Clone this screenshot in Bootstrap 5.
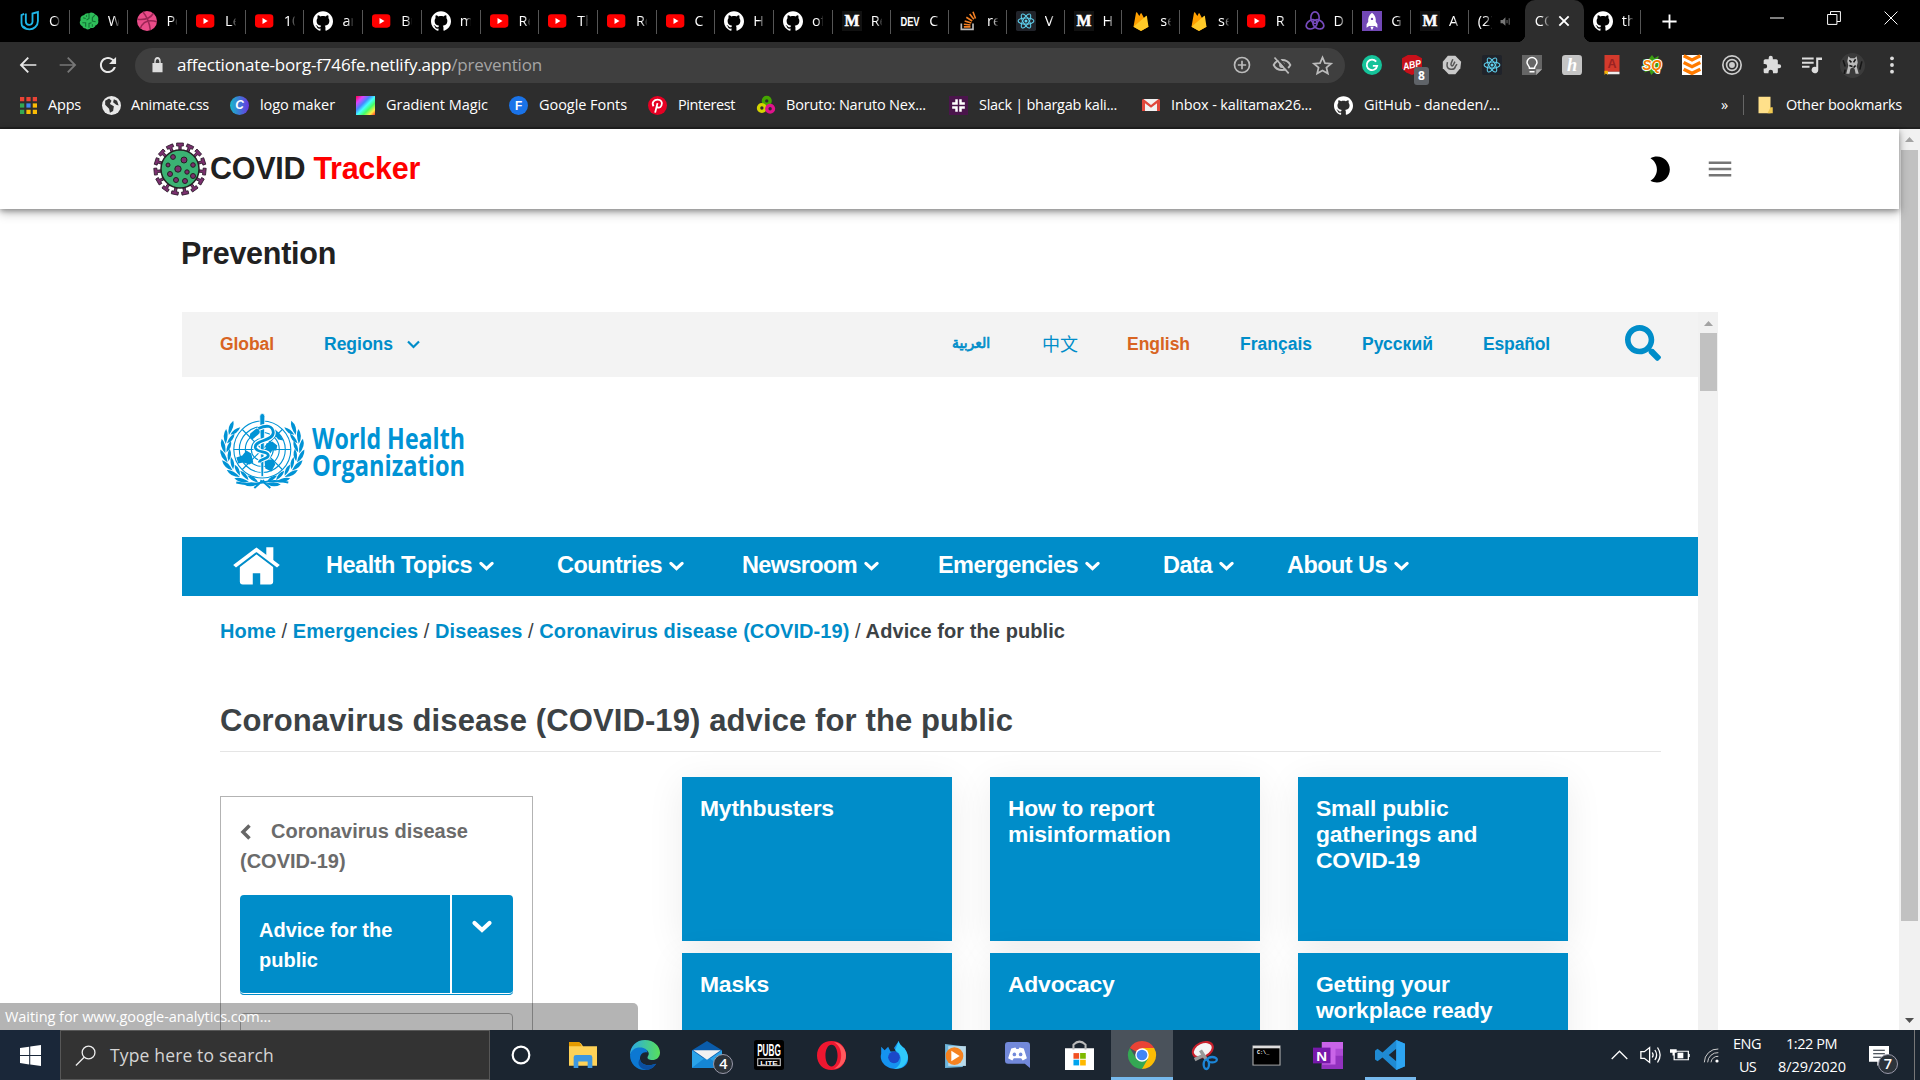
<!DOCTYPE html>
<html lang="en">
<head>
<meta charset="utf-8">
<title>COVID Tracker</title>
<link href="https://cdn.jsdelivr.net/npm/bootstrap@5.3.0/dist/css/bootstrap.min.css" rel="stylesheet">
<script src="https://cdn.jsdelivr.net/npm/bootstrap@5.3.0/dist/js/bootstrap.bundle.min.js"></script>
<style>
html,body{width:1920px;height:1080px;overflow:hidden}
body{font-family:"Liberation Sans",Arial,sans-serif;background:#fff;line-height:1.2}
svg{display:block;flex:none;overflow:visible}
.seg{font-family:"Open Sans","Noto Sans",sans-serif;font-size:14.5px;color:#fff}
.fit{white-space:nowrap;display:block;flex:none}
.strip{height:42px;background:#000;padding-left:11px}
.tabx{height:42px;flex:none;position:relative;padding-left:9px}
.tabx::after{content:"";position:absolute;right:0;top:10px;height:24px;width:1px;background:#555}
.tabx.noline::after{display:none}
.tabx .ttl{margin-left:9px;width:11px;overflow:hidden;white-space:nowrap;-webkit-mask-image:linear-gradient(90deg,#000 50%,rgba(0,0,0,.1));mask-image:linear-gradient(90deg,#000 50%,rgba(0,0,0,.1))}
.tabx.now{background:#2d2d2d;border-radius:10px 10px 0 0;padding-left:10px}
.tabx.now .ttl{margin:0;width:14px}
.tabx.now::before{content:"";position:absolute;left:-8px;right:-8px;bottom:0;height:8px;background:radial-gradient(circle at 0 0,transparent 8px,#2d2d2d 8.5px) left/8px 8px no-repeat,radial-gradient(circle at 100% 0,transparent 8px,#2d2d2d 8.5px) right/8px 8px no-repeat}
.winbtns{margin-left:auto;gap:43px;padding-right:22px;padding-bottom:6px}
.tools{height:46px;background:#2d2d2d;padding-left:18px}
.navbtns{gap:20px}
.omni{width:1210px;height:35px;border-radius:18px;background:#3f3f3f;margin-left:17px;padding:0 12px 0 17px}
.omni .url{font-size:17px;margin-left:14px}
.omni .url span{color:#a5a5a5}
.exts .cell{width:40px;position:relative}
.exts{margin-left:7px}
.mini{position:absolute;left:22px;top:12px;width:15px;height:18px;font-size:12px;line-height:18px;border-radius:3px;background:#5f6368;font-weight:700;text-align:center}
.marks{height:41px;background:#2d2d2d;border-bottom:2px solid #202020;padding-bottom:5px}
.pagearea{height:901px}
.main{width:1899px;position:relative}
.top{height:80px;padding:0 164px 0 153px;box-shadow:0 2px 5px rgba(0,0,0,.3),0 4px 10px rgba(0,0,0,.25);color:#212121}
.brandtxt{font-size:30.5px;font-weight:700;margin-left:3px;margin-top:-2px}
.red{color:#f00}
.htitle{font-size:30.5px;font-weight:700;color:#212121;line-height:36px;margin:26px 0 0 181px}
.frame{width:1536px;height:718px;margin:41px 0 0 182px;overflow:hidden}
.doc{width:1516px;overflow:hidden;color:#3c4245;font-weight:700}
.langs{height:65px;background:#f3f3f3;font-size:17.5px;color:#008dc9}
.orange{color:#d86422}
.logorow{height:160px;padding:37px 0 0 38px}
.mainnav{height:59px;background:#008dc9;color:#fff;font-size:23.5px}
.crumbs{font-size:20px;line-height:24px;margin:23px 0 0 38px;color:#3c4245}
.crumbs a{color:#008dc9;text-decoration:none}
.crumbs i{font-style:normal;font-weight:400}
.h1x{font-size:31px;line-height:36px;font-weight:700;width:1441px;margin:60px 0 0 38px;padding-bottom:11px;border-bottom:1px solid #e5e5e5;height:49px}
.cols{margin:25px 0 0 38px}
.side{width:313px;height:400px;border:1px solid #b3b3b3;margin-top:19px;padding:19px;font-size:20px;line-height:30px;color:#6b6b6b}
.side .back{height:79px}
.side .pick{width:273px;height:100px;background:#008dc9;border-radius:4px;color:#fff;border-bottom:1px solid #008dc9;box-shadow:inset 0 -1px #fff;margin-bottom:18px;padding-left:19px}
.side .pick .arrow{width:63px;border-left:2px solid #fff;padding:25px 0 0 20px}
.side .next{width:273px;height:100px;border:1px solid #b3b3b3;border-radius:4px}
.tiles{display:grid;grid-template-columns:270px 270px 270px;grid-template-rows:164px 164px;gap:12px 38px;margin-left:149px}
.tile{background:#008dc9;color:#fff;font-size:22.9px;letter-spacing:-.2px;line-height:26px;padding:18px;box-shadow:0 6px 35px rgba(0,0,0,.075)}
.sb{background:#f1f1f1;flex:none}
.sb .thumb{background:#c1c1c1;width:17px;margin-left:2px}
.bubble{position:absolute;left:0;top:1003px;width:638px;height:27px;background:rgba(0,0,0,.295);border-radius:0 5px 0 0;padding:4px 5px;line-height:20px}
.tbar{height:50px;background:#1b2530}
.start{width:60px;height:50px;background:#1a2739}
.find{width:430px;height:50px;background:#333;border:1px solid #575757;padding-left:14px;color:#d5d5d5;font-size:17.5px}
.find .fit{margin-left:14px}
.task{width:62.1px;height:50px;flex:none;position:relative}
.task.on{background:#4a525b;border-bottom:3px solid #76b9ed;padding-top:3px}
.task.run::after{content:"";position:absolute;left:6px;right:5px;bottom:0;height:3px;background:#76b9ed}
.count{position:absolute;width:20px;height:20px;border-radius:50%;border:1px solid #99a;background:#2c333a;line-height:18px;text-align:center;font-weight:600;left:37px;top:24px}
.lang2{line-height:23px}
.in6{margin-left:6px}
</style>
</head>
<body class="d-flex flex-column">
<div class="strip d-flex seg" id="strip"></div>
<div class="tools d-flex align-items-center seg">
  <div class="navbtns d-flex" id="navb"></div>
  <div class="omni d-flex align-items-center">
    <span data-i="lock" data-s="11,16"></span>
    <div class="url fit" data-fit="365">affectionate-borg-f746fe.netlify.app<span>/prevention</span></div>
    <div class="d-flex ms-auto" style="gap:20px"><span data-i="zoomin" data-s="20"></span><span data-i="eye" data-s="20"></span><span data-i="star" data-s="21"></span></div>
  </div>
  <div class="exts d-flex align-items-center" id="exts"></div>
</div>
<div class="marks d-flex align-items-center seg" id="marks"></div>
<div class="pagearea d-flex">
  <div class="main">
    <div class="top d-flex align-items-center">
      <svg id="virus" width="54" height="54" viewBox="-27 -27 54 54"></svg>
      <div class="brandtxt fit" data-fit="210">COVID <span class="red">Tracker</span></div>
      <div class="d-flex ms-auto" style="gap:30px"><span data-i="moon" data-s="31"></span><span data-i="menu" data-s="30"></span></div>
    </div>
    <div class="htitle"><span class="fit" data-fit="155">Prevention</span></div>
    <div class="frame d-flex">
      <div class="doc">
        <div class="langs d-flex align-items-center" id="langs"></div>
        <div class="logorow">
          <svg id="who" width="246" height="76" viewBox="0 0 246 76"></svg>
        </div>
        <div class="mainnav d-flex align-items-center" id="mainnav"></div>
        <div class="crumbs"><span class="fit" data-fit="845"><a href="#">Home</a> <i>/</i> <a href="#">Emergencies</a> <i>/</i> <a href="#">Diseases</a> <i>/</i> <a href="#">Coronavirus disease (COVID-19)</a> <i>/</i> Advice for the public</span></div>
        <h1 class="h1x"><span class="fit" data-fit="793">Coronavirus disease (COVID-19) advice for the public</span></h1>
        <div class="cols d-flex align-items-start">
          <div class="side">
            <div class="back"><span class="d-flex align-items-center"><span data-i="chevl" data-s="12,16"></span><span class="fit ms-3" style="padding-left:3px" data-fit="200">Coronavirus disease</span></span>(COVID-19)</div>
            <div class="pick d-flex justify-content-between"><div class="pt-3 mt-1">Advice for the<br>public</div><div class="arrow"><span data-i="chev" data-s="20,13"></span></div></div>
            <div class="next"></div>
          </div>
          <div class="tiles">
            <div class="tile">Mythbusters</div><div class="tile">How to report misinformation</div><div class="tile">Small public gatherings and COVID-19</div>
            <div class="tile">Masks</div><div class="tile">Advocacy</div><div class="tile">Getting your workplace ready</div>
          </div>
        </div>
      </div>
      <div class="sb" style="width:20px"><svg width="20" height="21"><path d="M6 14l4.500-5 4.500 5z" fill="#a3a3a3"/></svg><div class="thumb" style="height:58px"></div></div>
    </div>
  </div>
  <div class="sb d-flex flex-column" style="width:21px"><svg width="20" height="21"><path d="M6 13l4.500-5 4.500 5z" fill="#a3a3a3"/></svg><div class="thumb" style="height:771px"></div><svg class="mt-auto" width="20" height="21"><path d="M6 9l4.500 5 4.500-5z" fill="#505050"/></svg></div>
</div>
<div class="tbar d-flex seg">
  <div class="start d-flex align-items-center justify-content-center"><span data-i="win" data-s="21"></span></div>
  <div class="find d-flex align-items-center"><span data-i="glass" data-s="21"></span><span class="fit" data-fit="164">Type here to search</span></div>
  <div class="d-flex" id="tasks"></div>
  <div class="d-flex ms-auto align-items-center" id="tray"></div>
</div>
<div class="bubble seg"><span class="fit" data-fit="266">Waiting for www.google-analytics.com...</span></div>

<script>
const react='<g fill="none" stroke="#5fd0ee" stroke-width="1.300"><ellipse cx="12" cy="12" rx="9.500" ry="3.700"/><ellipse cx="12" cy="12" rx="9.500" ry="3.700" transform="rotate(60 12 12)"/><ellipse cx="12" cy="12" rx="9.500" ry="3.700" transform="rotate(120 12 12)"/></g><circle cx="12" cy="12" r="1.800" fill="#5fd0ee"/>';
const gh='M12 .297c-6.63 0-12 5.373-12 12 0 5.303 3.438 9.8 8.205 11.385.6.113.82-.258.82-.577 0-.285-.01-1.04-.015-2.04-3.338.724-4.042-1.61-4.042-1.61C4.422 18.07 3.633 17.7 3.633 17.7c-1.087-.744.084-.729.084-.729 1.205.084 1.838 1.236 1.838 1.236 1.07 1.835 2.809 1.305 3.495.998.108-.776.417-1.305.76-1.605-2.665-.3-5.466-1.332-5.466-5.93 0-1.31.465-2.38 1.235-3.22-.135-.303-.54-1.523.105-3.176 0 0 1.005-.322 3.3 1.23.96-.267 1.98-.399 3-.405 1.02.006 2.04.138 3 .405 2.28-1.552 3.285-1.23 3.285-1.23.645 1.653.24 2.873.12 3.176.765.84 1.23 1.91 1.23 3.22 0 4.61-2.805 5.625-5.475 5.92.42.36.81 1.096.81 2.22 0 1.606-.015 2.896-.015 3.286 0 .315.21.69.825.57C20.565 22.092 24 17.592 24 12.297c0-6.627-5.373-12-12-12';
const letter=(t,o={})=>`<text x="12" y="${o.y||18}" text-anchor="middle" font-family="${o.f||'Liberation Sans'}" font-weight="${o.w||700}" font-size="${o.s||16}" fill="${o.c||'#fff'}" ${o.l?`textLength="${o.l}" lengthAdjust="spacingAndGlyphs"`:''} ${o.x||''}>${t}</text>`;
const box=(c,r=0)=>`<rect width="24" height="24" rx="${r}" fill="${c}"/>`;
const P=(d,f='#fff')=>`<path d="${d}" fill="${f}"/>`;
const S=(d,c='#fff',w=2)=>`<path d="${d}" fill="none" stroke="${c}" stroke-width="${w}"/>`;
const I={
 uda:S('M5 3.500L1.800 5v9.500c0 4.500 3 7 6.500 7','#1fb6e8',2.200)+S('M7 3v9.500c0 5 7.500 6 8 .500V3l6.500-1.800V12c0 6-5 10-10 10-3.500 0-6-1.500-8-4','#1fb6e8',2.200),
 brain:'<path d="M12 3c2-2 6-1 7 1 3 1 5 4 4 7 1 3-1 6-3 6-1 3-4 4-6 3-1 2-4 3-6 1-2 0-4-1-4-3-3-1-4-5-2-7-1-3 1-6 4-6 1-2 4-3 6-2z" fill="#2ebd59"/>'+S('M12 3v6l-3 2M5 8l3 1M4 14h4v5M19 5l-3 3v4l4 1M12 20v-5l3-1M9 5v2M16 19v-3','#127434',1.300),
 drib:'<circle cx="12" cy="12" r="12" fill="#ea4c89"/>'+S('M7 1c5 6 8 13 9 22M.500 10c9 1 16-2 19-7M4 21c3-8 10-11 20-8','#9b2554',1.800),
 yt:'<rect x="0" y="4" width="22" height="16" rx="4" fill="#f00"/>'+P('M9 8.500l6 3.500-6 3.500z'),
 gh:P(gh),
 med:box('#111')+letter('M',{f:'Liberation Serif',s:19,y:18,x:'stroke="#fff" stroke-width=".6"'}),
 dev:box('#0a0a0a')+letter('DEV',{s:16,l:23}),
 so:S('M4 15v7h14v-7','#bcbbbb',2)+S('M7 19h8M7 16l8 .800M8 12l8 2.500M10 7.500l7 4.500M14 3.500l5 6.500M18 1l3 8','#f48024',1.900),
 react:box('#20232a',2)+react,
 fire:P('M3 19L6 2c.2-.8 1-.8 1.300-.2L10 6l1.500-3c.3-.5 1-.5 1.300 0L21 19l-8 4.500c-.6.300-1.300.300-2 0z','#ffa000')+P('M3 19L18 6c.4-.4 1-.2 1.100.4L21 19l-8 4.500c-.6.300-1.300.300-2 0z','#ffca28'),
 redux:'<g fill="none" stroke="#764abc" stroke-width="2"><ellipse cx="12" cy="8" rx="5" ry="7"/><ellipse cx="8" cy="16" rx="5" ry="7" transform="rotate(60 8 16)"/><ellipse cx="16" cy="16" rx="5" ry="7" transform="rotate(-60 16 16)"/></g>',
 rocket:box('#7248b6')+P('M12 2c4 3 5 7 4.500 11l2 3v4l-3-2h-7l-3 2v-4l2-3C7 9 8 5 12 2zM10 19h4l-2 4z')+'<circle cx="12" cy="9.500" r="1.400" fill="#7248b6"/>',
 spk:P('M1 9h4l5-5v16l-5-5H1z','#777')+S('M13 9v6M17 6v12','#666',2),
 x:S('M4 4l16 16M20 4L4 20','#fff',3.200), plus:S('M12 2v20M2 12h20','#fff',2.600),
 min:S('M0 12h24','#fff',1.700), max:S('M1 6h16v17H1zM6 6V1h17v17h-6','#fff',1.700), close:S('M1 1l22 22M23 1L1 23','#fff',1.700),
 back:P('M22 11H6.100l7-7L11.500 2.500 2 12l9.500 9.500 1.600-1.500-7-7H22z','#e8e8e8'), fwd:P('M2 11h15.900l-7-7 1.600-1.500L22 12l-9.500 9.500-1.600-1.500 7-7H2z','#777'),
 rel:P('M18.800 5.200C17 3.400 14.700 2.300 12 2.300 6.600 2.300 2.300 6.600 2.300 12S6.600 21.700 12 21.700c4.500 0 8.300-3.100 9.400-7.300h-2.600c-1 2.800-3.700 4.900-6.800 4.900-4 0-7.300-3.300-7.300-7.300S8 4.700 12 4.700c2 0 3.800.8 5.100 2.100L13.200 10.700h8.500V2.300z','#e8e8e8'),
 zoomin:'<circle cx="12" cy="12" r="9" fill="none" stroke="#bbb" stroke-width="2"/>'+S('M12 7v10M7 12h10','#bbb',2),
 eye:S('M2 12c4-8 16-8 20 0-4 8-16 8-20 0z','#bbb',2.200)+'<circle cx="12" cy="12" r="3.500" fill="#bbb"/>'+S('M5 1l17 20','#3f3f3f',3)+S('M3 3l17 19','#bbb',2),
 star:S('M12 2.800l2.800 6.400 7 .6-5.300 4.600 1.600 6.800-6.100-3.600-6.100 3.600 1.600-6.800L2.200 9.800l7-.6z','#bbb',2),
 gram:'<circle cx="12" cy="12" r="12" fill="#15c39a"/>'+S('M17 8a6.300 6.300 0 1 0 1.200 5H13','#fff',2.200),
 abp:P('M7 0h10l7 4v12l-5 5-7 3-7-3-5-5V4z','#c8101a')+letter('ABP',{s:12,y:16,l:22,x:'transform="rotate(-12 12 12)" font-style="italic"'}),
 mag:P('M7 1h9l7 7-1 8-6 7H8l-7-7V8z','#c9c9c9')+S('M6.500 8.500L6 12c0 6 8.500 7 10 2l2-3M13 5l-2 5c-1 3 1.500 4 2.500 2l2-4','#555',1.800),
 bulb:P('M0 0h24v17l-7 7H0z','#666')+P('M17 24v-7h7z','#aaa')+S('M9 16c0-3-3-4-3-7a6 6 0 0 1 12 0c0 3-3 4-3 7zM9 20h6','#fff',1.800),
 honey:box('#c4c4c4',4)+letter('h',{f:'Liberation Serif',s:22,y:19,x:'font-style="italic"'}),
 book:P('M3 0h18v20H6l-3 2z','#d33a2c')+P('M3 20h18v3H6z','#eee')+P('M3 19h4v5l-2-2-2 2z','#f5b400')+letter('A',{c:'#922',s:15,y:16}),
 sq:P('M12 0l3 4 5-3-1 6 5 1-3 5 3 4-6 1 1 5-5-2-3 3-2-5-6 2 1-5-4-3 4-3-3-5 6 1z','#3c9e14')+letter('SQ',{c:'#f47a00',s:18,y:18.5,l:23,x:'stroke="#fff" stroke-width="2.5" paint-order="stroke" font-style="italic"'}),
 daily:box('#fff')+S('M2 1l10 5 10-5M2 9l10 5 10-5M2 17l10 5 10-5','#ff7b00',4),
 target:'<g fill="none" stroke="#ccc" stroke-width="2"><circle cx="12" cy="12" r="11"/><circle cx="12" cy="12" r="6.500"/></g><circle cx="12" cy="12" r="3.500" fill="#ccc"/>',
 puz:P('M20.500 11H19V7c0-1.100-.9-2-2-2h-4V3.500a2.500 2.500 0 0 0-5 0V5H4c-1.100 0-2 .9-2 2v3.800h1.500a2.700 2.700 0 0 1 0 5.400H2V20c0 1.100.9 2 2 2h3.800v-1.500a2.700 2.700 0 0 1 5.400 0V22H17c1.100 0 2-.9 2-2v-4h1.500a2.500 2.500 0 0 0 0-5z','#ddd'),
 queue:P('M0 3h14v2.400H0zM0 8h14v2.400H0zM0 13h9v2.400H0zM17 3h7v3h-4.500v12a4 4 0 1 1-2.500-3.700z','#ddd'),
 ava:'<circle cx="12" cy="12" r="12" fill="#3b3b3b"/><path d="M8 3l2 2h4l2-2 1 6-1 4 2 7h-3l-1-5-2-1-2 1-1 5H6l2-8-1-4z" fill="#bbb"/><path d="M9 7l2 2M15 6l-2 3M9 12l3 1M15 12l-2 2M3 7l2 6M21 8l-2 8M5 16l-1 4" stroke="#161616" stroke-width="1.500"/>',
 dots:'<g fill="#ddd"><circle cx="12" cy="4" r="2.300"/><circle cx="12" cy="12" r="2.300"/><circle cx="12" cy="20" r="2.300"/></g>',
 apps:['#ea4335','#ea4335','#ea4335','#34a853','#4285f4','#fbbc05','#34a853','#fbbc05','#fbbc05'].map((c,i)=>`<rect x="${i%3*9}" y="${(i/3|0)*9}" width="6" height="6" fill="${c}"/>`).join(''),
 globe:'<circle cx="12" cy="12" r="12" fill="#e8e8e8"/>'+P('M4 6l5-3 3 3-2 4 5 3-1 6-4 2-1-5-5-5zM15 4l4 2 2 6-3-1-4-3z','#333'),
 canva:'<defs><linearGradient id="cg" x1="0" x2="1"><stop stop-color="#16b8cb"/><stop offset="1" stop-color="#6a35e0"/></linearGradient></defs><circle cx="12" cy="12" r="12" fill="url(#cg)"/>'+letter('C',{s:15,y:17,x:'font-style="italic"'}),
 grad:'<defs><linearGradient id="gg" x2="1" y2="1"><stop stop-color="#f04"/><stop offset=".2" stop-color="#d4f"/><stop offset=".38" stop-color="#48f"/><stop offset=".52" stop-color="#4ff"/><stop offset=".68" stop-color="#4f6"/><stop offset=".85" stop-color="#fe4"/><stop offset="1" stop-color="#f32"/></linearGradient></defs>'+box('url(#gg)'),
 gf:'<circle cx="12" cy="12" r="12" fill="#1a73e8"/>'+letter('F',{s:15,y:17.500}),
 pin:'<circle cx="12" cy="12" r="12" fill="#e60023"/>'+S('M9 21l3-12M7 13c-3-5 1-8.500 5-8.500s7 3 5 7.500c-1.500 3.500-5 3.500-6 1','#fff',2.300),
 trip:'<g fill="none" stroke-width="4.500"><circle cx="13" cy="6.500" r="4.500" stroke="#44a500"/><circle cx="6.500" cy="16" r="4.500" stroke="#d4d400"/><circle cx="17.500" cy="17" r="4.500" stroke="#e0128c"/></g>',
 slack:box('#4a154b')+S('M9.500 4v7M14.500 13v7M4 14.500h7M13 9.500h7M4 9.500h4M16 14.500h4M14.500 4v4M9.500 16v4','#fff',3.200),
 gmail:P('M2 4h20v16H2z','#f1f1f1')+P('M0 5l2-1 10 8 10-8 2 1v15h-4V9.500l-8 6-8-6V20H0z','#e0473b'),
 fold:P('M2 1h16v22H2z','#ffe08a')+P('M18 15h3v8h-7z','#f0c850'),
 lock:P('M5 9V7a7 7 0 0 1 14 0v2h4v14H1V9zm3 0h8V7a4 4 0 0 0-8 0z','#ddd'),
 moon:P('M10 2c-1.820 0-3.530.5-5 1.350C7.990 5.080 10 8.300 10 12s-2.010 6.920-5 8.650C6.470 21.500 8.180 22 10 22c5.520 0 10-4.480 10-10S15.520 2 10 2z','#000'),
 menu:P('M3 18h18v-2H3v2zm0-5h18v-2H3v2zm0-7v2h18V6H3z','#757575'),
 search:'<g transform="scale(.046875)">'+P('M505 442.7L405.3 343c-4.500-4.500-10.600-7-17-7H372c27.600-35.300 44-79.700 44-128C416 93.100 322.900 0 208 0S0 93.100 0 208s93.100 208 208 208c48.300 0 92.700-16.400 128-44v16.300c0 6.400 2.500 12.500 7 17l99.700 99.700c9.400 9.400 24.600 9.400 33.900 0l28.300-28.300c9.400-9.400 9.400-24.600.1-34zM208 336c-70.700 0-128-57.200-128-128 0-70.700 57.200-128 128-128 70.700 0 128 57.200 128 128 0 70.700-57.200 128-128 128z','#008dc9')+'</g>',
 home:P('M12 4.300l8.500 7.800V22c0 1-.5 1.700-1.500 1.700h-5.100v-7.200h-3.800v7.200H5c-1 0-1.500-.7-1.500-1.700v-9.900z')+S('M.8 12.700L12 2.200l11.200 10.500','#008dc9',3.600)+S('M.8 12.200L12 1.700l11.200 10.500','#fff',2.100)+P('M17 .200h3.600v9L17 6z'),
 win:P('M0 3.300l10.500-1.400v9.600H0zM11.700 1.700L24 0v11.500H11.700zM0 12.600h10.500v9.600L0 20.700zM11.700 12.600H24V24l-12.300-1.700z'),
 glass:'<circle cx="15.500" cy="8.500" r="7.300" fill="none" stroke="#eee" stroke-width="1.500"/>'+S('M10.500 14L1 23.500','#eee',1.500),
 cort:'<circle cx="12" cy="12" r="10" fill="none" stroke="#fff" stroke-width="2.600"/>',
 folder:P('M0 1h10l2 3h12v18H0z','#ffd257')+P('M0 0h9l2 4H0z','#e59b00')+P('M4 24V14q0-2 2-2h12q2 0 2 2v10h-4v-6H8v6z','#3d97e0'),
 edge:'<defs><linearGradient id="eg" x1="0" x2="1"><stop stop-color="#2aa8e8"/><stop offset="1" stop-color="#58e05a"/></linearGradient></defs>'+P('M0 12C0 5 5 0 12 0c7 0 12 5 12 10 0 4-3 6-6 6s-4-1-4-2 1-1.500 1-3c0-2-2-4-6-4-5 0-8 3-9 5z','url(#eg)')+P('M0 12c1-4 4-6 8-6 4 0 6 2 6 4-4-1-6 2-6 5 0 4 5 6 9 5l4-1c-2 3-5 5-9 5C5 24 0 19 0 12z','#0c78d2')+P('M8 15c0 4 5 6 9 5l4-1c-2 3-5 5-8 5-5-1-8-5-5-9z','#0b4fa0'),
 mail:P('M0 8l12-8 12 8v15H0z','#0a5cab')+P('M0 8l12 9L24 8v15H0z','#2aa3e8')+P('M0 23L12 13l12 10z','#1586d4')+P('M1 8h22L12 16z','#f1f1f1'),
 pubg:box('#000',2)+letter('PUBG',{s:12.500,y:13,l:19})+'<rect x="3" y="15" width="18" height="5.500" fill="none" stroke="#ddd" stroke-width=".8"/>'+letter('LITE',{s:5,y:19.800,l:14}),
 opera:'<path fill-rule="evenodd" fill="#ee1730" d="M12 0C5 0 0 5 0 12s5 12 12 12 12-5 12-12S19 0 12 0zm0 3c3 0 5 4 5 9s-2 9-5 9-5-4-5-9 2-9 5-9z"/><path d="M14 1c5 0 10 5 10 11s-5 11-10 11c4-2 6-6 6-11s-2-9-6-11z" fill="#ff5a5e"/>',
 fox:P('M1 5l3 3 3-3 2 4h5l-2-3 4-6 2 5 3 1 3 7c1 7-4 11-11 11S-1 18 1 11z','#1593f0')+P('M13 8l3-8c0 4 8 6 8 14-1 7-6 10-12 10 6-2 9-11 1-16z','#30c8fa')+'<circle cx="12" cy="14" r="5" fill="#1b48c8"/>',
 wmp:P('M2 1l17 2v20L2 24z','#6fb7dd')+P('M5 3h17v19H5z','#b9daea')+'<circle cx="11" cy="12.500" r="8.500" fill="#f58220"/>'+P('M8 7.500l8 5-8 5z'),
 disc:P('M3 0h18q3 0 3 3v21l-5-4H3q-3 0-3-3V3q0-3 3-3z','#7289da')+P('M6 6l4-1 1 1.500h2L14 5l4 1 3 9-4 2-1.500-2h-7L7 17l-4-2z')+'<circle cx="9" cy="11.500" r="1.700" fill="#7289da"/><circle cx="15" cy="11.500" r="1.700" fill="#7289da"/>',
 store:P('M0 6h24v18H0z')+S('M7 7V3q5-5 10 0v4','#bbb',1.700)+P('M7 10h4.700v4.700H7z','#f25022')+P('M12.500 10h4.700v4.700h-4.700z','#7fba00')+P('M7 15.500h4.700v4.700H7z','#00a4ef')+P('M12.500 15.500h4.700v4.700h-4.700z','#ffb900'),
 chrome:P('M12 12V6h10.400A12 12 0 0 1 12 24z','#fbbc05')+P('M12 12l5.200 3L12 24A12 12 0 0 1 1.600 6L7 15z','#34a853')+P('M12 12L1.600 6A12 12 0 0 1 22.400 6H12z','#ea4335')+'<circle cx="12" cy="12" r="5.800" fill="#fff"/><circle cx="12" cy="12" r="4.600" fill="#4285f4"/>',
 snip:'<ellipse cx="11" cy="7.500" rx="9" ry="6" fill="#f4f4f4" stroke="#c8202c" stroke-width="1.800" transform="rotate(-25 11 7.500)"/>'+S('M4 16l8-4M9 8l5 8','#999',3)+'<g fill="none" stroke="#1c86d8" stroke-width="2"><ellipse cx="19" cy="16" rx="4" ry="2.300"/><ellipse cx="14" cy="20" rx="2.300" ry="4"/></g>',
 cmd:'<rect y="2" width="24" height="20" fill="#000" stroke="#aaa" stroke-width="1"/><rect y="2" width="24" height="2.500" fill="#ddd"/>'+letter('C:\\_',{s:6,y:10,l:11,f:'Liberation Mono',x:'dx="-3"'}),
 one:P('M7 0h17v24H7z','#c964e8')+P('M18 6h6v6h-6z','#ae4bd5')+P('M18 12h6v12H7v-4h11z','#9332bf')+P('M0 5h14v14H0z','#7719aa')+letter('N',{s:12,y:16.500,x:'dx="-5"'}),
 code:P('M17 0l7 3v18l-7 3L6 14 2 17l-2-1.500v-7L2 7l4 3zM17 7l-6 5 6 5z','#1f8ad2')+P('M17 0l7 3v18l-7 3z','#2da5f2'),
 up:S('M1 17L12 6l11 11','#fff',1.800),
 vol:S('M1 8h4l6-5v18l-6-5H1z','#fff',1.500)+S('M14 9q2 3 0 6M17 6q4 6 0 12M20 3q6 9 0 18','#fff',1.500),
 batt:S('M5 6h17v12H5V6M23 10v4','#fff',1.500)+P('M9 8h7v8H9z')+P('M0 3h8v5H5v4H3V8H0z'),
 wifi:S('M2 23A20 20 0 0 1 23 3M7 23A15 15 0 0 1 23 8.500M12 23A10 10 0 0 1 23 14','#ccc',1.500)+'<circle cx="21" cy="21" r="2.400" fill="#fff"/>',
 note:P('M0 1h24v18h-9l-5 5v-5H0z')+S('M5 6h14M5 10h14M5 14h10','#1b2530',1.300)
};
const ic=(n,w=20,h=w,extra='')=>{
  if(n==='chev')return `<svg width="${w}" height="${h}" viewBox="0 0 20 13"><path d="M2.500 3L10 10 17.500 3" fill="none" stroke="#fff" stroke-width="4.200" stroke-linecap="round"/></svg>`;
  if(n==='chevb')return `<svg width="${w}" height="${h}" viewBox="0 0 13 9"><path d="M1 1.500l5.500 5.500L12 1.500" fill="none" stroke="#008dc9" stroke-width="2.200"/></svg>`;
  if(n==='chevl')return `<svg width="${w}" height="${h}" viewBox="0 0 12 16"><path d="M9.500 2.500L3 9 9.500 15.500" fill="none" stroke="#666" stroke-width="3.500"/></svg>`;
  return `<svg width="${w}" height="${h}" viewBox="0 0 24 24" preserveAspectRatio="none" ${extra}>${I[n]}</svg>`;
};
const $=id=>document.getElementById(id);
const fit=(t,w,c='')=>`<span class="fit ${c}" data-fit="${w}">${t}</span>`;
// Fills a flex row; each item is [start, end, markup] and the free space before it becomes its margin.
const row=(el,items,from=0)=>{let p=from;el.innerHTML=items.map(([a,b,h])=>{const s=`<div class="d-flex align-items-center flex-shrink-0" style="margin-left:${a-p}px;width:${b-a}px">${h}</div>`;p=b;return s}).join('')};

document.querySelectorAll('[data-i]').forEach(e=>{const [w,h]=e.dataset.s.split(',').map(Number);e.innerHTML=ic(e.dataset.i,w,h||w)});

const tabs=[['uda','On'],['brain','We'],['drib','Po'],['yt','Le'],['yt','10'],['gh','an'],['yt','Bu'],['gh','m'],['yt','Re'],['yt','Th'],['yt','Re'],['yt','C'],['gh','H'],['gh','of'],['med','Re'],['dev','C'],['so','re'],['react','V'],['med','H'],['fire','se'],['fire','se'],['yt','R'],['redux','D'],['rocket','G'],['med','A']];
$('strip').innerHTML=tabs.map(([i,t],k)=>`<div class="tabx d-flex align-items-center" style="width:${k<15?58.7:57.75}px">${ic(i,20,20)}<span class="ttl">${t}</span></div>`).join('')
 +`<div class="tabx noline d-flex align-items-center" style="width:56px"><span class="ttl m-0" style="width:14px">(2)</span><span class="ms-2">${ic('spk',13)}</span></div>`
 +`<div class="tabx noline now d-flex align-items-center" style="width:59px"><span class="ttl">CO</span><span class="ms-2">${ic('x',14)}</span></div>`
 +`<div class="tabx d-flex align-items-center" style="width:57px">${ic('gh',20)}<span class="ttl">th</span></div><div class="d-flex align-items-center ms-3 ps-1">${ic('plus',17)}</div><div class="winbtns d-flex align-items-center">${ic('min',14)}${ic('max',14)}${ic('close',14)}</div>`;
$('navb').innerHTML=ic('back',20)+ic('fwd',20)+ic('rel',20);
$('exts').innerHTML=['gram','abp','mag','react','bulb','honey','book','sq','daily','target','puz','queue','ava','dots'].map((n,k)=>`<div class="cell d-flex justify-content-center">${ic(n,n=='ava'?25:20)}${k==1?'<span class="mini">8</span>':''}</div>`).join('');

const bm=[['apps',20,'Apps',48,81,17],['globe',102,'Animate.css',131,209],['canva',230,'logo maker',260,335],['grad',356,'Gradient Magic',386,488],['gf',509,'Google Fonts',539,627],['pin',648,'Pinterest',678,735],['trip',757,'Boruto: Naruto Nex...',786,926,18],['slack',949,'Slack | bhargab kali...',979,1117],['gmail',1142,'Inbox - kalitamax26...',1171,1312,18],['gh',1334,'GitHub - daneden/...',1364,1500]];
const bi=[];bm.forEach(([n,x,t,a,b,s])=>{const w=s||19;bi.push([x,x+w,ic(n,w)],[a,b,fit(t,b-a)])});
bi.push([1721,1730,fit('»',9)],[1743,1744,'<span style="width:1px;height:20px;background:#666"></span>'],[1757,1775,ic('fold',18)],[1786,1902,fit('Other bookmarks',116)]);
row($('marks'),bi);

row($('langs'),[[38,92,fit('Global',54,'orange')],[142,211,fit('Regions',69)],[225,238,ic('chevb',13,9)],
 [770,808,'<svg width="38" height="24"><text x="19" y="15" text-anchor="middle" textLength="38" lengthAdjust="spacingAndGlyphs" font-family="DejaVu Sans" font-weight="400" font-size="15" fill="#008dc9" stroke="#008dc9" stroke-width=".7">العربية</text></svg>'],[860,896,'<span style="font:400 18px \'Noto Sans CJK SC\',sans-serif;line-height:20px;margin-top:-3px">中文</span>'],
 [945,1008,fit('English',63,'orange')],[1058,1130,fit('Français',72)],[1180,1251,fit('Русский',71)],[1301,1368,fit('Español',67)],[1443,1479,`<span style="margin-top:-3px">${ic('search',36)}</span>`]]);
const mn=[[51,98,`<span style="margin-top:-2px">${ic('home',47,38)}</span>`]];
[['Health Topics',144,290],['Countries',375,480],['Newsroom',560,675],['Emergencies',756,896],['Data',981,1030],['About Us',1105,1205]].forEach(([t,a,b])=>mn.push([a,b,`<span style="margin-top:-3px">${fit(t,b-a)}</span>`],[b+7,b+21,`<span style="margin-top:-2px">${ic('chev',15,10)}</span>`]));
row($('mainnav'),mn);

const size={cort:[20,20],folder:[28,26],edge:[30,30],mail:[30,28],pubg:[30,30],opera:[29,29],fox:[28,28],wmp:[25,25],disc:[25,26],store:[29,29],chrome:[28,28],snip:[28,28],cmd:[27,23],one:[30,27],code:[30,30]};
$('tasks').innerHTML=Object.keys(size).map(n=>`<div class="task d-flex align-items-center justify-content-center ${n=='chrome'?'on':n=='code'?'run':''}">${ic(n,...size[n])}${n=='mail'?'<span class="count">4</span>':''}</div>`).join('');
row($('tray'),[[1611,1629,ic('up',17)],[1640,1661,ic('vol',21,20)],[1670,1691,ic('batt',20,17)],[1703,1719,ic('wifi',16)],
 [1733,1761,`<div class="lang2">${fit('ENG',28)}${fit('US',17,'in6')}</div>`],
 [1778,1847,`<div class="lang2">${fit('1:22 PM',51,'ms-2')}${fit('8/29/2020',68)}</div>`],
 [1869,1889,`<div class="position-relative">${ic('note',20,21)}<span class="count" style="left:9px;top:9px">7</span></div>`],[1914,1920,'<span style="width:1px;height:50px;background:#777"></span>']],1611);

// Virus mark: studs round a spotted ball.
let v='';for(let k=0;k<15;k++)v+=`<g transform="rotate(${k*24})"><path d="M-1.200-19v-4h-2.200v-3h6.800v3h-2.200v4z" fill="#7b2f6e" stroke="#2a1a2a" stroke-width=".8"/></g>`;
v+='<circle r="19" fill="#3bb273" stroke="#222" stroke-width="1.500"/>';
[[-7,-12,2.400],[4,-9,3],[-12,-4,2],[13,-4,2.300],[-2,0,3.200],[7,3,2.200],[-10,5,2.500],[13,7,2.500],[-4,11,2.500],[5,12,2.500]].forEach(([x,y,r])=>v+=`<circle cx="${x}" cy="${y}" r="${r}" fill="#7b2f6e" stroke="#222"/>`);
$('virus').innerHTML=v;

// WHO emblem: polar grid, land, laurel leaves, staff with serpent, wordmark.
const B='#0093d5';let w=`<g transform="translate(42.300 35.500)"><g fill="none" stroke="${B}" stroke-width="1.100"><circle r="28.500"/><circle r="23"/><circle r="17"/><circle r="11"/><path d="M-28.500 0H28.500M-20-20l40 40M20-20l-40 40"/></g>`;
w+=P('M-26 8l6-2 4-5 5 3 2 9-4 2-6-2-5 1zM4-6l6-2 5 4-1 5-4 0-2 3-5-4zM2 10l9 0 2 5-4 7-6-3zM-12-16l6-5 5 1-3 5-6 5-3-2zM13-20l5 6 3 5-5-1-5-6z',B);
for(const s of [1,-1])for(let k=0;k<8;k++){const ang=217-k*15.8,a=ang*Math.PI/180,x=Math.cos(a)*36.5,y=Math.sin(a)*33.5;
 w+=`<g transform="scale(${s} 1) translate(${x.toFixed(1)} ${y.toFixed(1)}) rotate(${(ang+90).toFixed(1)})"><path d="M-7 0Q-1-7 7-5 3 0-7 0z" fill="${B}"/><path d="M-6 1Q1 0 6 4.500-1 6.500-6 1z" fill="${B}"/></g>`}
w+=S('M-26 33Q-12 36 0 33t26 0M-8 38.500Q-3 33 2 31M8 38.500Q3 33-2 31',B,1.900)
 +`<path d="M-2.500-33a2.500 3 0 0 1 5 0L1.200 27h-2.400z" fill="${B}" stroke="#fff" stroke-width=".7"/>`
 +S('M-4-21Q10-27 11-17C11-8-8-10-7-2-6 4 6 1 6 6 6 10-3 9-3 13','#fff',5)+S('M-4-21Q10-27 11-17C11-8-8-10-7-2-6 4 6 1 6 6 6 10-3 9-3 13',B,2.800)+'</g>';
w+=`<g fill="${B}" font-family="Open Sans" font-weight="700" font-size="29"><text x="92" y="35" textLength="153" lengthAdjust="spacingAndGlyphs">World Health</text><text x="92" y="62" textLength="153" lengthAdjust="spacingAndGlyphs">Organization</text></g>`;
$('who').innerHTML=w;

// Tune letter spacing so that each label takes its set width.
document.querySelectorAll('[data-fit]').forEach(e=>{e.style.width='max-content';const n=e.textContent.length,t=+e.dataset.fit;const d=(t-e.getBoundingClientRect().width)/n;e.style.letterSpacing=d.toFixed(3)+'px';e.style.width=t+'px'});
</script>
</body>
</html>
